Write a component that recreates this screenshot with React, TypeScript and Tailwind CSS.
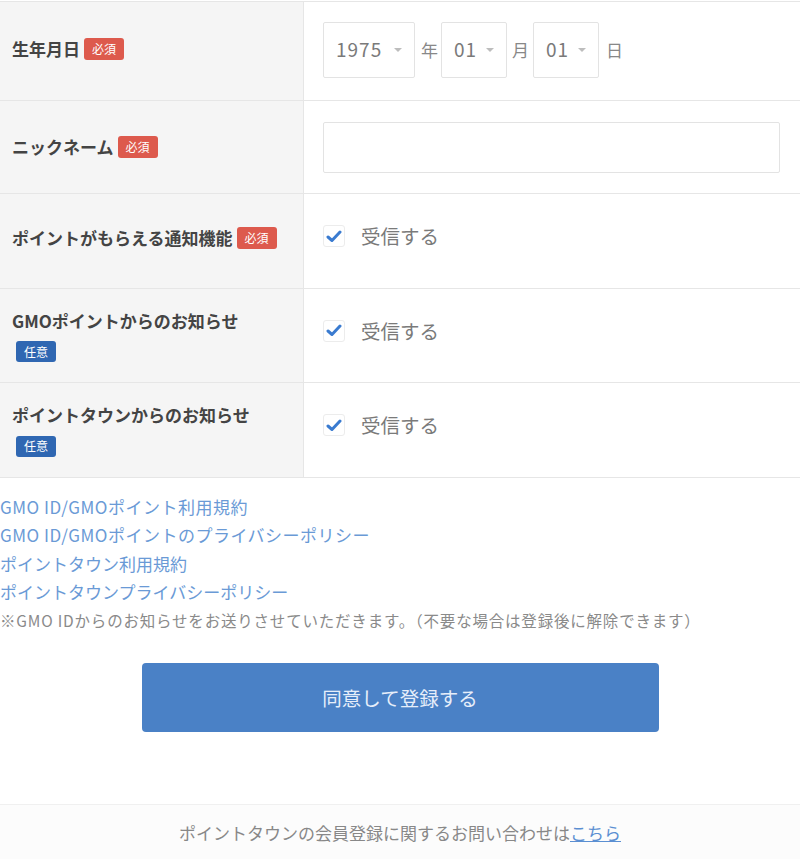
import React from "react";

const font = { fontFamily: '"Noto Sans CJK JP", "Noto Sans", sans-serif' };

function Req() {
  return (
    <span className="ml-[4px] inline-flex h-[22px] w-[40px] items-center justify-center rounded-[3px] bg-[#dd5a4d] text-[12px] font-normal leading-none text-white align-middle">
      必須
    </span>
  );
}
function Opt() {
  return (
    <span className="inline-flex h-[21px] w-[40px] items-center justify-center rounded-[3px] bg-[#2f67b2] text-[12px] font-normal leading-none text-white">
      任意
    </span>
  );
}

function Caret() {
  return (
    <svg width="10" height="6" viewBox="0 0 10 6" className="ml-auto">
      <path d="M1 1 L5 5 L9 1 Z" fill="#bdbdbd" />
    </svg>
  );
}

function Select({ value, w }: { value: string; w: string }) {
  return (
    <div className={`flex h-[56px] items-center rounded-[2px] border border-[#e3e3e3] bg-white pl-[12px] pr-[11px] text-[19px] tracking-[1px] text-[#7a7a7a] ${w}`}>
      <span>{value}</span>
      <Caret />
    </div>
  );
}

function Check() {
  return (
    <div className="flex items-center pb-[10px]">
      <div className="flex h-[22px] w-[22px] items-center justify-center rounded-[3px] border border-[#ececec] bg-white">
        <svg width="16" height="13" viewBox="0 0 16 13">
          <path d="M2 7 L6 10.5 L14 2" stroke="#3a7bd0" strokeWidth="3" fill="none" strokeLinecap="round" strokeLinejoin="round" />
        </svg>
      </div>
      <span className="ml-[16px] text-[19.5px] text-[#7a7a7a]">受信する</span>
    </div>
  );
}

function Row({ h, label, children, lpb = "" }: { h: string; label: React.ReactNode; children: React.ReactNode; lpb?: string }) {
  return (
    <div className={`flex border-b border-[#e6e6e6] ${h}`}>
      <div className={`flex w-[304px] shrink-0 items-center border-r border-[#e6e6e6] bg-[#f5f5f5] pl-[12px] text-[17px] font-bold text-[#444] ${lpb}`}>
        {label}
      </div>
      <div className="flex flex-1 items-center bg-white pl-[19px] pr-[20px]">{children}</div>
    </div>
  );
}

export default function App() {
  return (
    <div className="min-h-[861px] w-[800px] bg-white" style={font}>
      <div className="mt-[1px] border-t border-[#e6e6e6]">
        <Row h="h-[99px]" lpb="pb-[5px]" label={<><span>生年月日</span><Req /></>}>
          <div className="flex items-center pb-[3px]">
            <Select value="1975" w="w-[92px]" />
            <span className="ml-[6px] mr-[3px] text-[17px] text-[#888]">年</span>
            <Select value="01" w="w-[66px]" />
            <span className="ml-[5px] mr-[4px] text-[17px] text-[#888]">月</span>
            <Select value="01" w="w-[66px]" />
            <span className="ml-[7px] text-[17px] text-[#888]">日</span>
          </div>
        </Row>
        <Row h="h-[93px]" label={<><span>ニックネーム</span><Req /></>}>
          <div className="h-[51px] w-full rounded-[2px] border border-[#e3e3e3] bg-white" />
        </Row>
        <Row h="h-[95px]" lpb="pb-[7px]" label={<><span>ポイントがもらえる通知機能</span><Req /></>}>
          <Check />
        </Row>
        <Row
          h="h-[94px]"
          label={
            <div className="flex flex-col items-start">
              <span className="leading-[24px]">GMOポイントからのお知らせ</span>
              <div className="mt-[4px] pl-[4px]"><Opt /></div>
            </div>
          }
        >
          <Check />
        </Row>
        <Row
          h="h-[95px]"
          label={
            <div className="flex flex-col items-start">
              <span className="leading-[24px]">ポイントタウンからのお知らせ</span>
              <div className="mt-[4px] pl-[4px]"><Opt /></div>
            </div>
          }
        >
          <Check />
        </Row>
      </div>

      <div className="pt-[15px] text-[17px] leading-[28.3px] text-[#6a9ad6]">
        <div className="tracking-[0.5px]">GMO ID/GMOポイント利用規約</div>
        <div className="tracking-[0.5px]">GMO ID/GMOポイントのプライバシーポリシー</div>
        <div>ポイントタウン利用規約</div>
        <div>ポイントタウンプライバシーポリシー</div>
        <div className="text-[15.5px] tracking-[0.8px] text-[#8a8a8a]">※GMO IDからのお知らせをお送りさせていただきます。（不要な場合は登録後に解除できます）</div>
      </div>

      <div className="flex justify-center pt-[29px]">
        <button className="h-[69px] w-[517px] rounded-[4px] bg-[#4a81c6] text-[19.5px] text-[#e6eefa]">
          同意して登録する
        </button>
      </div>

      <div className="mt-[72px] flex h-[55px] items-center justify-center border-t border-[#f0f0f0] bg-[#fcfcfc] text-[17px] text-[#888]">
        <span>ポイントタウンの会員登録に関するお問い合わせは</span>
        <span className="text-[#5b8fd2] underline">こちら</span>
      </div>
    </div>
  );
}
